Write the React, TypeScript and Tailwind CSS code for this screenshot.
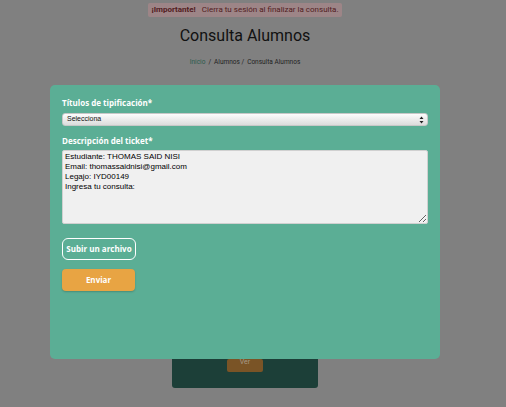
import React from "react";

export default function App() {
  return (
    <div className="relative w-[506px] h-[407px] overflow-hidden bg-[#808080]" style={{ fontFamily: "Roboto, 'Liberation Sans', sans-serif" }}>
      {/* page behind overlay */}
      <div className="w-[490px] flex flex-col items-center pt-[3px]">
        <div className="flex items-center gap-[6px] h-[14px] w-[194px] justify-center rounded-[2px] bg-[#9d8587] text-[8px] text-[#521c21]">
          <span className="font-bold">¡Importante!</span>
          <span>Cierra tu sesión al finalizar la consulta.</span>
        </div>
        <div className="mt-[9px] text-[16px] leading-[20px] text-[#111] font-normal">Consulta Alumnos</div>
        <div className="mt-[12px] text-[6.5px] leading-[8px] text-[#222] flex gap-[3px]">
          <span className="text-[#2a5a4c]">Inicio</span>
          <span>/</span>
          <span>Alumnos /</span>
          <span>Consulta Alumnos</span>
        </div>
        <div className="mt-[237px] w-[146px] h-[85px] rounded-[3px] bg-[#1c3f38] flex flex-col items-center justify-end pb-[16px]">
          <div className="w-[36px] h-[13px] rounded-[2px] bg-[#7a5426] flex items-start justify-center text-[7px] leading-[7px] text-[#a79a87]">Ver</div>
        </div>
      </div>

      {/* modal */}
      <div className="absolute left-[50px] top-[85px] w-[390px] h-[274px] rounded-[5px] bg-[#5bae95] px-[12px] pt-[13px]" style={{ fontFamily: "'Open Sans', 'Liberation Sans', sans-serif" }}>
        <div className="text-[8px] leading-[10px] font-bold text-white">Títulos de tipificación*</div>
        <div className="mt-[5px] h-[13px] w-[366px] rounded-[3px] border border-[#c8c8c8] bg-gradient-to-b from-[#fdfdfd] to-[#dcdcdc] flex items-center justify-between pl-[4px] pr-[3px] text-[7px] text-[#111]" style={{ fontFamily: "'Liberation Sans', sans-serif" }}>
          <span>Selecciona</span>
          <svg width="5" height="8" viewBox="0 0 5 8"><path d="M2.5 0.5 L4.5 3 H0.5 Z M2.5 7.5 L4.5 5 H0.5 Z" fill="#222" /></svg>
        </div>
        <div className="mt-[10px] text-[8px] leading-[10px] font-bold text-white">Descripción del ticket*</div>
        <textarea
          readOnly
          defaultValue={"Estudiante: THOMAS SAID NISI\nEmail: thomassaidnisi@gmail.com\nLegajo: IYD00149\nIngresa tu consulta:"}
          className="mt-[4px] block w-[366px] h-[74px] rounded-[2px] border border-[#d0d0d0] bg-[#f0f0f0] px-[2px] pt-[1px] text-[8px] leading-[10px] text-black outline-none"
          style={{ fontFamily: "'Liberation Sans', sans-serif" }}
        />
        <div className="mt-[14px] w-[74px] h-[22px] rounded-[6px] border border-white flex items-center justify-center text-[8px] font-bold text-white">Subir un archivo</div>
        <div className="mt-[9px] w-[73px] h-[22px] rounded-[4px] bg-[#e8a443] shadow-[0_1px_2px_rgba(0,0,0,0.2)] flex items-center justify-center text-[8px] font-bold text-white">Enviar</div>
      </div>
    </div>
  );
}
